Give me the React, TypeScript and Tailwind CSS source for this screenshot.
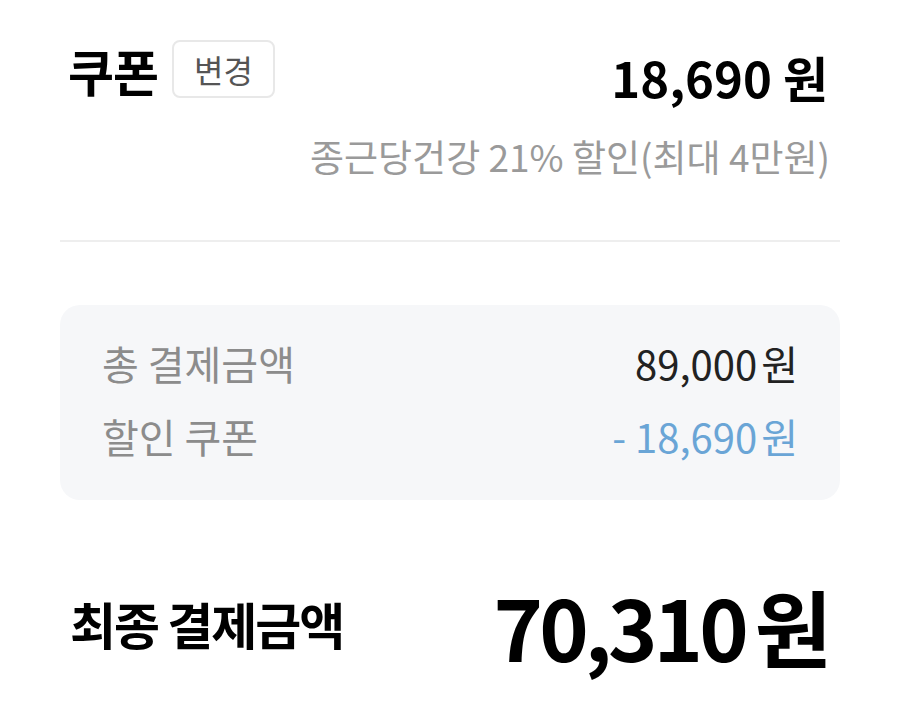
import React from "react"

const font = { fontFamily: '"Noto Sans CJK KR", "Noto Sans", sans-serif' }

export default function App() {
    return (
        <div className="w-[900px] h-[716px] bg-white overflow-hidden px-[60px] pt-[40px]" style={font}>
            {/* Coupon row */}
            <div className="flex items-center justify-between h-[58px]">
                <div className="flex items-center gap-[14px] pl-[8px]">
                    <span className="text-[50px] font-bold text-black leading-none tracking-[-1px] mt-[2px]">쿠폰</span>
                    <span className="h-[58px] px-[20px] flex items-center rounded-[8px] border-2 border-[#e8e8e8] text-[32px] text-[#555] leading-none">변경</span>
                </div>
                <span className="text-[49px] font-bold text-black leading-none pr-[12px] mt-[14px]">18,690 원</span>
            </div>
            <div className="flex justify-end mt-[40px] pr-[10px]">
                <span className="text-[37px] text-[#9a9a9a] leading-none">종근당건강 21% 할인(최대 4만원)</span>
            </div>

            {/* Divider */}
            <div className="h-[2px] bg-[#eeeeee] mt-[65px]" />

            {/* Summary box */}
            <div className="mt-[63px] h-[195px] rounded-[20px] bg-[#f6f7f9] px-[42px] pt-[38px] flex flex-col gap-[33px]">
                <div className="flex items-center justify-between">
                    <span className="text-[40px] text-[#8c8c8c] leading-none">총 결제금액</span>
                    <span className="text-[40px] text-[#222] leading-none">89,000<span className="ml-[4px]">원</span></span>
                </div>
                <div className="flex items-center justify-between">
                    <span className="text-[40px] text-[#8c8c8c] leading-none">할인 쿠폰</span>
                    <span className="text-[40px] text-[#6aa5d6] leading-none">- 18,690<span className="ml-[4px]">원</span></span>
                </div>
            </div>

            {/* Final amount */}
            <div className="flex items-center justify-between mt-[84px] pl-[10px] pr-[12px]">
                <span className="text-[50px] font-bold text-black leading-none tracking-[-2px] -mt-[6px]">최종 결제금액</span>
                <span className="text-[84px] font-bold text-black leading-none tracking-[-4px]">70,310<span className="ml-[10px]">원</span></span>
            </div>
        </div>
    )
}
